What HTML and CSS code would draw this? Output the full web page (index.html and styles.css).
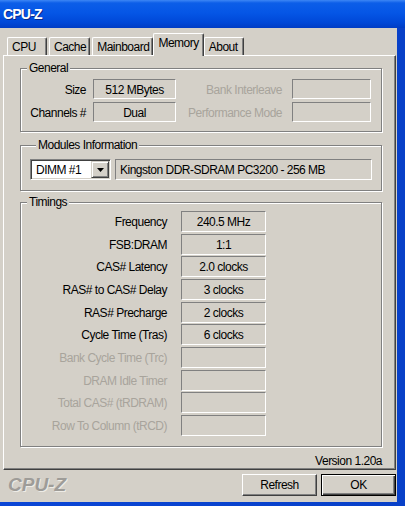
FILE: index.html
```html
<!DOCTYPE html>
<html lang="en">
<head>
  <meta charset="UTF-8">
  <title>CPU-Z</title>
  <link rel="stylesheet" href="styles.css">
</head>
<body>
  <div class="window">
    <div class="titlebar">CPU-Z</div>

    <div class="client">
      <div class="tabs">
        <div class="tab">CPU</div>
        <div class="tab">Cache</div>
        <div class="tab">Mainboard</div>
        <div class="tab active">Memory</div>
        <div class="tab">About</div>
      </div>

      <div class="page">
        <fieldset class="group general">
          <legend>General</legend>
          <div class="grid">
            <div class="label">Size</div>
            <div class="field">512 MBytes</div>
            <div class="label wide disabled">Bank Interleave</div>
            <div class="field"></div>
            <div class="label">Channels #</div>
            <div class="field">Dual</div>
            <div class="label wide disabled">Performance Mode</div>
            <div class="field"></div>
          </div>
        </fieldset>

        <fieldset class="group modules">
          <legend>Modules Information</legend>
          <div class="module-row">
            <div class="combo">
              <span>DIMM #1</span>
              <div class="combo-btn">
                <svg width="7" height="4" viewBox="0 0 7 4"><path d="M0 0h7L3.5 4z" fill="#000"/></svg>
              </div>
            </div>
            <div class="field text">Kingston DDR-SDRAM PC3200 - 256 MB</div>
          </div>
        </fieldset>

        <fieldset class="group timings">
          <legend>Timings</legend>
          <div class="timing-grid">
            <div class="label">Frequency</div><div class="field">240.5 MHz</div>
            <div class="label">FSB:DRAM</div><div class="field">1:1</div>
            <div class="label">CAS# Latency</div><div class="field">2.0 clocks</div>
            <div class="label">RAS# to CAS# Delay</div><div class="field">3 clocks</div>
            <div class="label">RAS# Precharge</div><div class="field">2 clocks</div>
            <div class="label">Cycle Time (Tras)</div><div class="field">6 clocks</div>
            <div class="label disabled">Bank Cycle Time (Trc)</div><div class="field"></div>
            <div class="label disabled">DRAM Idle Timer</div><div class="field"></div>
            <div class="label disabled">Total CAS# (tRDRAM)</div><div class="field"></div>
            <div class="label disabled">Row To Column (tRCD)</div><div class="field"></div>
          </div>
        </fieldset>

        <div class="version">Version 1.20a</div>
      </div>

      <div class="footer">
        <div class="logo">CPU-Z</div>
        <button class="btn">Refresh</button>
        <button class="btn default">OK</button>
      </div>
    </div>
  </div>
</body>
</html>
```

FILE: styles.css
```css
* {
  margin: 0;
  padding: 0;
  box-sizing: border-box;
}

body {
  font-family: "Liberation Sans", Arial, sans-serif;
  font-size: 12px;
  letter-spacing: -0.5px;
  color: #000;
  background: #0a46d6;
}

.window {
  width: 405px;
  height: 506px;
  display: flex;
  flex-direction: column;
  background: linear-gradient(90deg, #0a46d6, #0840c8);
}

.titlebar {
  height: 28px;
  padding: 0 0 1px 3px;
  display: flex;
  align-items: center;
  font: bold 14px "Liberation Sans", sans-serif;
  letter-spacing: -0.8px;
  color: #fff;
  text-shadow: 1px 1px 0 #0a2a8c;
  background: linear-gradient(#3d86f5 0, #0c5ee8 3px, #0556e6 45%, #0048d8 80%, #003cc4 100%);
}

.client {
  flex: 1;
  margin: 0 8px 4px 0;
  padding: 0 1px 0 3px;
  background: #d4d0c8;
  display: flex;
  flex-direction: column;
}

/* tabs */
.tabs {
  display: flex;
  align-items: flex-end;
  height: 22px;
  margin-top: 5px;
  padding-left: 4px;
}

.tab {
  min-width: 40px;
  height: 18px;
  padding: 0 3px 0 4px;
  margin-right: 2px;
  line-height: 18px;
  border: 1px solid;
  border-color: #fff #404040 transparent #fff;
  border-bottom: none;
  border-radius: 2px 2px 0 0;
  box-shadow: inset -1px 0 0 #808080;
}

.tab.active {
  height: 23px;
  margin: 0 0 -1px -2px;
  padding: 0 4px;
  line-height: 19px;
  background: #d4d0c8;
  position: relative;
  z-index: 1;
}

/* tab page */
.page {
  height: 415px;
  padding: 5px 13px 0 16px;
  border: 1px solid;
  border-color: #fff #404040 #404040 #fff;
  box-shadow: inset -1px -1px 0 #808080;
  display: flex;
  flex-direction: column;
}

.group {
  min-width: 0;
  border: 1px solid #808080;
  box-shadow: inset 1px 1px 0 #fff, 1px 1px 0 #fff;
}

.group legend {
  margin-left: 6px;
  padding: 0 2px;
  line-height: 15px;
  background: #d4d0c8;
}

.general {
  padding: 3px 0 9px;
}

.modules {
  margin-top: 6px;
  padding: 6px 9px 10px;
}

.timings {
  margin-top: 4px;
  padding: 1px 0 10px;
}

.label {
  text-align: right;
  white-space: nowrap;
  line-height: 22px;
}

.disabled {
  color: #a8a49c;
}

.field {
  height: 20px;
  padding-top: 1px;
  line-height: 18px;
  text-align: center;
  white-space: nowrap;
  border: 1px solid;
  border-color: #808080 #fff #fff #808080;
}

.grid {
  display: grid;
  grid-template-columns: 72px 83px 116px 79px;
  grid-auto-rows: 20px;
  row-gap: 3px;
}

.grid .label {
  padding-right: 7px;
}

.grid .label.wide {
  padding-right: 10px;
}

.module-row {
  display: flex;
  gap: 4px;
}

.combo {
  width: 81px;
  height: 21px;
  padding: 2px 1px 2px 5px;
  display: flex;
  align-items: center;
  justify-content: space-between;
  background: #fff;
  border: 1px solid;
  border-color: #808080 #fff #fff #808080;
  box-shadow: inset 1px 1px 0 #404040, inset -1px -1px 0 #d4d0c8;
}

.combo-btn {
  width: 18px;
  height: 17px;
  display: flex;
  align-items: center;
  justify-content: center;
  background: #d4d0c8;
  border: 1px solid;
  border-color: #d4d0c8 #404040 #404040 #d4d0c8;
  box-shadow: inset 1px 1px 0 #fff, inset -1px -1px 0 #808080;
}

.field.text {
  flex: 1;
  height: 21px;
  line-height: 19px;
  padding-left: 4px;
  text-align: left;
}

.timing-grid {
  display: grid;
  grid-template-columns: 160px 85px;
  grid-auto-rows: 21px;
  row-gap: 1.67px;
}

.timing-grid .label {
  padding-right: 14px;
  line-height: 23px;
}

.timing-grid .field {
  height: 21px;
  line-height: 19px;
}

.version {
  margin-top: auto;
  padding: 0 0 1px;
  line-height: 14px;
  text-align: right;
}

/* bottom bar */
.footer {
  flex: 1;
  display: flex;
  align-items: center;
  gap: 4px;
  padding: 0 0 2px 5px;
}

.logo {
  margin-right: auto;
  font: italic bold 19px "Liberation Sans", sans-serif;
  letter-spacing: 0;
  color: #9e9c98;
  text-shadow: 1px 1px 0 #eeece6;
}

.btn {
  width: 75px;
  height: 22px;
  font: inherit;
  letter-spacing: inherit;
  color: #000;
  background: #d4d0c8;
  border: 1px solid;
  border-color: #fff #404040 #404040 #fff;
  box-shadow: inset -1px -1px 0 #808080;
}

.btn.default {
  border-color: #000;
  box-shadow: inset 1px 1px 0 #fff, inset -1px -1px 0 #404040, inset -2px -2px 0 #808080;
}
```
